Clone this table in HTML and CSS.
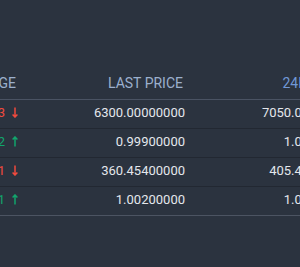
FILE: index.html
```html
<!DOCTYPE html>
<html>
<head>
<meta charset="utf-8">
<link rel="stylesheet" href="styles.css">
</head>
<body>
<div class="wrap">
  <div class="table">
    <div class="cell head col-a">24H CHANGE</div>
    <div class="cell head col-b">LAST PRICE</div>
    <div class="cell head col-c active">24H HIGH</div>

    <div class="cell col-a down">-4.23<svg class="arrow" viewBox="0 0 6 11" width="6" height="11"><path d="M3 0.5V10M0.6 7.4L3 10L5.4 7.4" /></svg></div>
    <div class="cell col-b">6300.00000000</div>
    <div class="cell col-c">7050.00000000</div>

    <div class="cell col-a up">0.02<svg class="arrow" viewBox="0 0 6 11" width="6" height="11"><path d="M3 10.5V1M0.6 3.6L3 1L5.4 3.6" /></svg></div>
    <div class="cell col-b">0.99900000</div>
    <div class="cell col-c">1.00000000</div>

    <div class="cell col-a down">-3.61<svg class="arrow" viewBox="0 0 6 11" width="6" height="11"><path d="M3 0.5V10M0.6 7.4L3 10L5.4 7.4" /></svg></div>
    <div class="cell col-b">360.45400000</div>
    <div class="cell col-c">405.40000000</div>

    <div class="cell col-a up last">0.01<svg class="arrow" viewBox="0 0 6 11" width="6" height="11"><path d="M3 10.5V1M0.6 3.6L3 1L5.4 3.6" /></svg></div>
    <div class="cell col-b last">1.00200000</div>
    <div class="cell col-c last">1.00000000</div>
  </div>
</div>
</body>
</html>
```

FILE: styles.css
```css
html, body {
  margin: 0;
  padding: 0;
  background: #2b333f;
  overflow: hidden;
}
body {
  width: 300px;
  height: 267px;
  font-family: Roboto, "Liberation Sans", sans-serif;
}
.wrap {
  padding-top: 69px;
  margin-left: -82px;
  width: 500px;
}
.table {
  display: grid;
  grid-template-columns: 100px 167px 168px;
}
.cell {
  text-align: right;
  font-size: 13px;
  color: #e4e7ec;
  line-height: 26px;
  padding-bottom: 2px;
  border-bottom: 1px solid #222832;
  white-space: nowrap;
}
.cell.head {
  font-size: 14px;
  color: #9cb0cd;
  line-height: 28px;
  padding-bottom: 2px;
  border-bottom: 1px solid #4a5363;
}
.head.col-a { padding-right: 2px; }
.head.col-b { padding-right: 2px; }
.head.col-c { padding-right: 8px; }
.head.active { color: #7198d6; }
.cell.last { border-bottom-color: #4c5462; }
.down { color: #f04a3e; }
.up { color: #12a56c; }
.arrow {
  margin-left: 7px;
  vertical-align: -1px;
  fill: none;
  stroke: currentColor;
  stroke-width: 1.5;
}
```
